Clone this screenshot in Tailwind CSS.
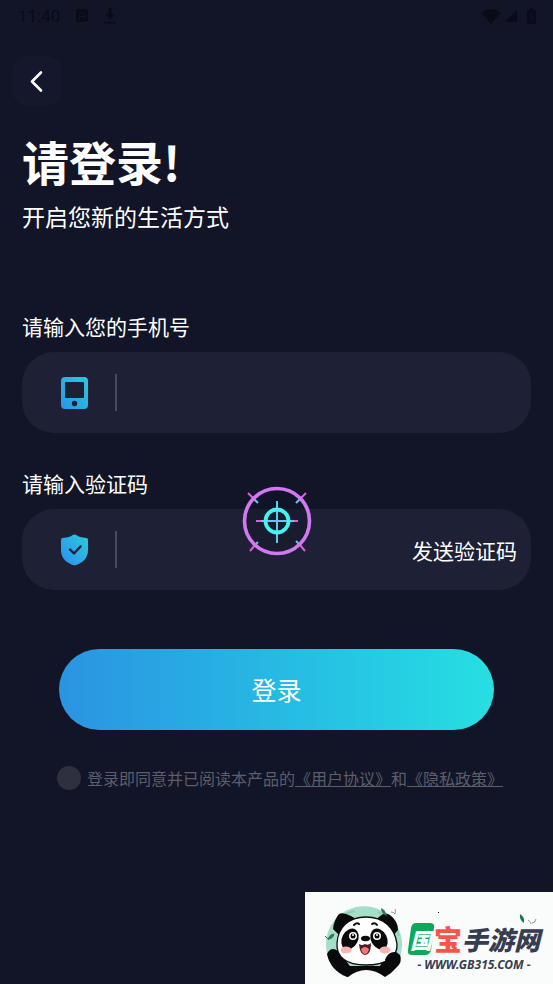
<!DOCTYPE html>
<html lang="zh-CN">
<head>
  <meta charset="UTF-8">
  <meta name="viewport" content="width=device-width, initial-scale=1.0">
  <title>请登录</title>
  <script src="https://cdn.jsdelivr.net/npm/@tailwindcss/browser@4"></script>
</head>
<body class="bg-[#121528] text-white font-['Noto_Sans_CJK_SC',sans-serif]">
  <div class="relative flex min-h-screen flex-col">

    <!-- status bar -->
    <header class="flex h-8 items-center justify-between pl-[18px] pr-[17px] text-[#090b18]">
      <div class="flex items-center gap-4">
        <span class="font-[Roboto,sans-serif] text-[17px] leading-6">11:40</span>
        <svg class="h-[14px] w-3" viewBox="0 0 12 14">
          <rect width="12" height="13" rx="2" fill="currentColor"/>
          <path d="M3.5 10V5.500L6 3l2.500 2.500V10M4 7.500h4" fill="none" stroke="#121528"/>
        </svg>
        <svg class="h-4 w-3" viewBox="0 0 12 16" fill="currentColor">
          <path d="M4.500 0h3v6H11l-5 5.500L1 6h3.500zM0 14h12v1.500H0z"/>
        </svg>
      </div>
      <div class="flex items-center gap-1">
        <svg class="h-[15px] w-5" viewBox="0 0 20 15" fill="currentColor">
          <path d="M0 4Q10-4 20 4L10 15z"/>
        </svg>
        <svg class="h-3 w-3" viewBox="0 0 14 14" fill="currentColor">
          <path d="M14 0v14H0z"/>
        </svg>
        <svg class="ml-1.5 h-4 w-[9px]" viewBox="0 0 9 16">
          <path d="M3 0h3v2h3v14H0V2h3z" fill="currentColor"/>
          <path d="M5.500 4L3 9h3l-2 5" fill="none" stroke="#121528"/>
        </svg>
      </div>
    </header>

    <button type="button" aria-label="返回" class="ml-3 mt-6 flex size-[50px] items-center justify-center rounded-2xl bg-[#15182d]">
      <svg class="size-6" viewBox="0 0 24 24" fill="none" stroke="#fff" stroke-width="2.600" stroke-linecap="round" stroke-linejoin="round">
        <path d="M16 3.500L7 12.500l9 9"/>
      </svg>
    </button>

    <main class="px-[22px] pt-6">
      <h1 class="text-[47px] font-bold leading-[62px]">请登录!</h1>
      <p class="mt-2 text-[23px] leading-8">开启您新的生活方式</p>

      <form class="mt-20">
        <label for="phone" class="block text-[21px] leading-7">请输入您的手机号</label>
        <div class="mt-3 flex h-[81px] items-center rounded-[32px] bg-[#1e2035] pl-[39px] pr-4">
          <svg class="h-8 w-[27px] shrink-0" viewBox="0 0 27 32">
            <defs>
              <linearGradient id="phoneFill" x1="1" y1="0" x2="0" y2="1">
                <stop offset="0" stop-color="#2bcbdc"/>
                <stop offset="1" stop-color="#2b94e8"/>
              </linearGradient>
            </defs>
            <rect width="27" height="32" rx="4" fill="url(#phoneFill)"/>
            <rect x="4" y="5" width="19" height="16" rx="1" fill="#1e2035"/>
            <circle cx="13.500" cy="26.500" r="2.700" fill="#1e2035"/>
          </svg>
          <span class="ml-[27px] h-[37px] w-0.5 shrink-0 bg-[#494b5c]"></span>
          <input id="phone" type="tel" class="ml-4 h-full min-w-0 flex-1 bg-transparent text-[21px] outline-none">
        </div>

        <label for="code" class="mt-9 block text-[21px] leading-7">请输入验证码</label>
        <div class="mt-3 flex h-[81px] items-center rounded-[32px] bg-[#1e2035] pl-[39px] pr-[14px]">
          <svg class="h-8 w-[27px] shrink-0" viewBox="0 0 27 32">
            <defs>
              <linearGradient id="shieldFill" x1="1" y1="0" x2="0" y2="1">
                <stop offset="0" stop-color="#2bcbdc"/>
                <stop offset="1" stop-color="#2b8ff0"/>
              </linearGradient>
            </defs>
            <path d="M12 .8Q13.500 0 15 .8Q18 3.500 25.500 4Q27 4 27 6V16Q27 27.500 13.500 31.500Q0 27.500 0 16V6Q0 4 1.500 4Q9 3.500 12 .8z" fill="url(#shieldFill)"/>
            <path d="M9 15.500l4 4 6.500-7" fill="none" stroke="#1e2035" stroke-width="2.400" stroke-linecap="round" stroke-linejoin="round"/>
          </svg>
          <span class="ml-[27px] h-[37px] w-0.5 shrink-0 bg-[#494b5c]"></span>
          <input id="code" type="text" inputmode="numeric" class="ml-4 h-full min-w-0 flex-1 bg-transparent text-[21px] outline-none">
          <button type="button" class="shrink-0 text-[21px] leading-7">发送验证码</button>
        </div>

        <div class="mt-[59px] px-[37px]">
          <button type="submit" class="h-[81px] w-full rounded-full bg-linear-to-r from-[#2b93e2] to-[#27dfe2] text-[25px]">登录</button>
        </div>

        <div class="mt-8 flex items-center justify-center gap-1.5 pl-[7px] text-[16px] leading-8 text-[#5c5e69]">
          <input id="agree" type="checkbox" class="size-6 shrink-0 appearance-none rounded-full bg-[#2f303f] checked:bg-[#2b93e2]">
          <p class="whitespace-nowrap"><label for="agree">登录即同意并已阅读本产品的</label><a href="#" class="underline">《用户协议》</a>和<a href="#" class="underline">《隐私政策》</a></p>
        </div>
      </form>
    </main>

    <!-- crosshair floating over the code field -->
    <svg class="absolute left-1/2 top-[485px] size-[72px] -translate-x-1/2" viewBox="0 0 72 72" fill="none">
      <circle cx="36" cy="36" r="34" fill="#121528" fill-opacity=".4"/>
      <g stroke="#e25bdc" stroke-width="2">
        <path d="M7 8l5 5M65 8l-5 5M9 66l5-6M64 66l-5-6"/>
        <path d="M15 36h8M49 36h8"/>
      </g>
      <g stroke="#62c9ec" stroke-width="2">
        <path d="M12 13l5 5M60 13l-5 5M14 60l3-3M59 60l-4-4"/>
        <path d="M20 36h33M36 16v42"/>
      </g>
      <circle cx="36" cy="36" r="32.500" stroke="#d278f2" stroke-width="3.600"/>
      <circle cx="36" cy="36" r="11.500" stroke="#48f0f0" stroke-width="3.800"/>
    </svg>

    <!-- site badge -->
    <aside class="absolute bottom-0 right-0 flex h-[92px] w-[248px] bg-[#fafbfb] pl-5">
      <svg class="h-[92px] w-20 shrink-0" viewBox="0 0 80 92">
        <path d="M18 84A38 38 0 1 1 60 84z" fill="#a5dfc7"/>
        <path d="M8 34Q17 21 30 19M53 20Q68 26 74 44" stroke="#8bd0b4" stroke-width="2" fill="none"/>
        <g fill="#0a0a0c">
          <path d="M8 37Q9 28 14 22Q18 20 26 24L31 27L15 44z"/>
          <path d="M73 38Q73 29 65 23Q60 19 54 25L50 28L67 45z"/>
          <path d="M2 62Q6 54 13 59L25 74H55L60 64Q68 56 75 63Q78 70 71 76Q66 82 60 85H22Q5 78 2 62z"/>
        </g>
        <path d="M23 85Q41 71 60 85V87H23z" fill="#fafbfb"/>
        <path d="M41 25C59 25 70 36 72 52C73 65 61 73 41 73C21 73 11 65 12 51C13 36 23 25 41 25z" fill="#fff" stroke="#0a0a0c" stroke-width="1.300"/>
        <path d="M60 68Q63 59 71 60Q77 64 73 73L62 76z" fill="#0a0a0c"/>
        <path d="M29 33q3-3 5-1M47 32q3-2 5 1" stroke="#0a0a0c" stroke-width="2" fill="none" stroke-linecap="round"/>
        <g fill="#0a0a0c">
          <ellipse cx="25" cy="47" rx="8" ry="11" transform="rotate(28 25 47)"/>
          <ellipse cx="54" cy="47" rx="8" ry="11" transform="rotate(-28 54 47)"/>
          <ellipse cx="40.500" cy="46.500" rx="4.500" ry="2.700"/>
        </g>
        <g fill="#fff">
          <circle cx="28" cy="44" r="4"/>
          <circle cx="52" cy="44" r="4"/>
        </g>
        <g fill="#0a0a0c">
          <circle cx="28" cy="44" r="2.500"/>
          <circle cx="52" cy="44" r="2.500"/>
        </g>
        <circle cx="28" cy="43" r="1" fill="#fff"/>
        <circle cx="52" cy="43" r="1" fill="#fff"/>
        <ellipse cx="21" cy="58" rx="5.500" ry="3.500" fill="#f9b4ae"/>
        <ellipse cx="60" cy="58" rx="5.500" ry="3.500" fill="#f9b4ae"/>
        <path d="M34 52Q37 54 40 52Q43 54 46 51Q46 63 40 63Q35 63 34 52z" fill="#4b1d22"/>
        <path d="M36 57Q40 53 44 57Q43 62 40 62Q37 62 36 57z" fill="#f47575"/>
        <path d="M3 47Q5 42 9 42Q8 47 3 47zM0 44l4 4" fill="#2e7a5e" stroke="#2e7a5e"/>
        <path d="M56 16q4 1 6 8q-6-2-6-8" fill="#2e7a5e"/>
        <path d="M66 20q3 0 4 2M70 17q1 3 0 5" stroke="#8a9a94" fill="none"/>
      </svg>
      <div class="flex flex-col pl-[3px] pt-[29px]">
        <div class="flex items-center font-black leading-8">
          <span class="relative flex h-8 w-[26px] items-center justify-center text-[22px] text-white">
            <svg class="absolute inset-0 h-8 w-[26px]" viewBox="0 0 26 32">
              <path d="M8 0H22Q27 0 26 5L23 27Q22 32 17 32H4Q-1 32 0 27L3 5Q4 0 8 0z" fill="#0da959"/>
            </svg>
            <span class="relative italic">国</span>
          </span>
          <span class="text-[28px] text-[#fa5448]">宝</span>
          <span class="text-[26px] italic leading-9 text-[#363d50]">手游网</span>
        </div>
        <p class="-mt-1 text-center font-['Noto_Sans',sans-serif] text-[12px] font-bold italic leading-6 text-[#363d50]">- WWW.GB315.COM -</p>
      </div>
      <svg class="absolute right-3 top-5 h-4 w-6" viewBox="0 0 24 16" fill="none">
        <path d="M3 2q5 3 4 9q-5-3-4-9" fill="#16784f"/>
        <path d="M11 8q2 1 3 4M19 7q-1 4-4 4" stroke="#7a958a"/>
      </svg>
      <span class="absolute left-[133px] top-5 size-px bg-black"></span>
    </aside>
  </div>
</body>
</html>
